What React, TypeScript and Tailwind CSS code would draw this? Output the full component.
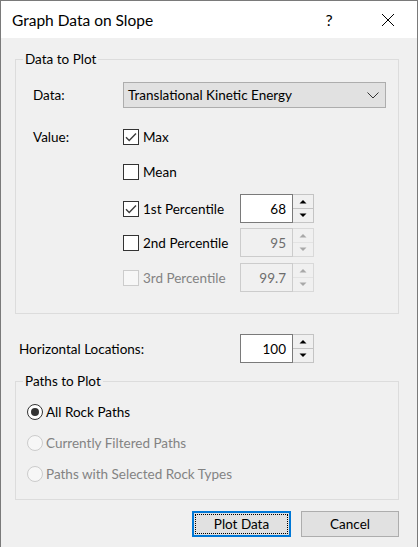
import { useState } from 'react';

const font = "font-['Lato','Liberation_Sans',sans-serif]";

function CheckBox({ checked, disabled, label, onChange }: { checked: boolean; disabled?: boolean; label: string; onChange?: () => void }) {
  return (
    <button
      type="button"
      onClick={disabled ? undefined : onChange}
      className="flex items-center gap-[4px] h-[29px] text-left"
    >
      <span
        className={`w-[16px] h-[16px] border flex items-center justify-center shrink-0 ${
          disabled ? 'border-[#cccccc] bg-[#f7f7f7]' : 'border-[#333333] bg-white'
        }`}
      >
        {checked && (
          <svg width="14" height="14" viewBox="0 0 14 14">
            <path d="M2 7.2 L5.2 10.4 L12 3.4" fill="none" stroke="#3c3c3c" strokeWidth="1.4" />
          </svg>
        )}
      </span>
      <span className={disabled ? 'text-[#838383]' : 'text-black'}>{label}</span>
    </button>
  );
}

function SpinBox({ value, disabled }: { value: string; disabled?: boolean }) {
  const arrow = disabled ? '#a8a8a8' : '#000000';
  return (
    <div className="flex h-[29px]">
      <div
        className={`w-[53px] border flex items-center justify-end pr-[6px] ${
          disabled ? 'border-[#cccccc] bg-[#f0f0f0] text-[#6d6d6d]' : 'border-[#7a7a7a] bg-white text-black'
        }`}
      >
        {value}
      </div>
      <div className={`w-[21px] flex flex-col border-y border-r ${disabled ? 'border-[#d9d9d9]' : 'border-[#c4c4c4]'}`}>
        <div className={`flex-1 flex items-center justify-center border-b bg-[#f0f0f0] ${disabled ? 'border-[#e3e3e3]' : 'border-[#c4c4c4]'}`}>
          <svg width="8" height="5" viewBox="0 0 8 5">
            <path d="M0.5 4.5 L4 1 L7.5 4.5 Z" fill={arrow} />
          </svg>
        </div>
        <div className="flex-1 flex items-center justify-center bg-[#f0f0f0]">
          <svg width="8" height="5" viewBox="0 0 8 5">
            <path d="M0.5 0.5 L4 4 L7.5 0.5 Z" fill={arrow} />
          </svg>
        </div>
      </div>
    </div>
  );
}

function Radio({ checked, disabled, label, onChange }: { checked: boolean; disabled?: boolean; label: string; onChange?: () => void }) {
  return (
    <button type="button" onClick={disabled ? undefined : onChange} className="flex items-center gap-[3px] h-[24px] text-left">
      <span
        className={`w-[16px] h-[16px] rounded-full border flex items-center justify-center ${
          disabled ? 'border-[#cccccc] bg-[#f7f7f7]' : 'border-[#333333] bg-white'
        }`}
      >
        {checked && <span className="w-[8px] h-[8px] rounded-full bg-[#333333]" />}
      </span>
      <span className={disabled ? 'text-[#838383]' : 'text-black'}>{label}</span>
    </button>
  );
}

export default function App() {
  const [max, setMax] = useState(true);
  const [mean, setMean] = useState(false);
  const [p1, setP1] = useState(true);
  const [p2, setP2] = useState(false);

  return (
    <div className={`w-[418px] h-[547px] bg-[#f0f0f0] border-x border-t border-[#7a7a7a] ${font} text-[13.5px] leading-[18px] text-black`}>
      {/* title bar */}
      <div className="h-[37px] bg-white flex items-center pl-[11px]">
        <span className="text-[15.5px] flex-1">Graph Data on Slope</span>
        <span className="text-[16px] w-[20px] mr-[42px] text-center">?</span>
        <svg width="14" height="14" viewBox="0 0 14 14" className="mr-[22px]">
          <path d="M1 1 L13 13 M13 1 L1 13" stroke="#000" strokeWidth="1" />
        </svg>
      </div>

      <div className="pl-[14px] pr-[18px]">
        <fieldset className="mt-[12px] border border-[#dcdcdc] pl-[17px] pt-[14px] pb-[21px]">
          <legend className="-ml-[10px] px-[2px] leading-[18px]">Data to Plot</legend>

          <div className="flex items-center h-[26px]">
            <span className="w-[90px]">Data:</span>
            <div className="w-[263px] h-[26px] bg-[#e1e1e1] border border-[#adadad] flex items-center pl-[4px] pr-[6px]">
              <span className="flex-1">Translational Kinetic Energy</span>
              <svg width="12" height="7" viewBox="0 0 12 7">
                <path d="M0.5 0.5 L6 6 L11.5 0.5" fill="none" stroke="#333" strokeWidth="1" />
              </svg>
            </div>
          </div>

          <div className="flex mt-[14px]">
            <span className="w-[90px] h-[29px] flex items-center">Value:</span>
            <div className="flex flex-col">
              <CheckBox checked={max} label="Max" onChange={() => setMax(!max)} />
              <div className="mt-[6px]">
                <CheckBox checked={mean} label="Mean" onChange={() => setMean(!mean)} />
              </div>
              <div className="mt-[8px] flex items-center">
                <div className="w-[117px]">
                  <CheckBox checked={p1} label="1st Percentile" onChange={() => setP1(!p1)} />
                </div>
                <SpinBox value="68" />
              </div>
              <div className="mt-[5px] flex items-center">
                <div className="w-[117px]">
                  <CheckBox checked={p2} label="2nd Percentile" onChange={() => setP2(!p2)} />
                </div>
                <SpinBox value="95" disabled />
              </div>
              <div className="mt-[6px] flex items-center">
                <div className="w-[117px]">
                  <CheckBox checked={false} disabled label="3rd Percentile" />
                </div>
                <SpinBox value="99.7" disabled />
              </div>
            </div>
          </div>
        </fieldset>

        <div className="mt-[20px] flex items-center">
          <span className="w-[225px] pl-[4px]">Horizontal Locations:</span>
          <SpinBox value="100" />
        </div>

        <fieldset className="mt-[9px] border border-[#dcdcdc] pl-[11px] pt-[10px] pb-[13px]">
          <legend className="-ml-[4px] px-[2px] leading-[18px]">Paths to Plot</legend>
          <div className="flex flex-col gap-[7px]">
            <Radio checked label="All Rock Paths" />
            <Radio checked={false} disabled label="Currently Filtered Paths" />
            <Radio checked={false} disabled label="Paths with Selected Rock Types" />
          </div>
        </fieldset>

        <div className="mt-[11px] flex justify-end gap-[10px]">
          <button type="button" className="w-[99px] h-[26px] bg-[#e1e1e1] border-2 border-[#0078d7] p-[1px]">
            <span className="w-full h-full flex items-center justify-center border border-dotted border-black">Plot Data</span>
          </button>
          <button type="button" className="w-[98px] h-[26px] bg-[#e1e1e1] border border-[#adadad] flex items-center justify-center">
            Cancel
          </button>
        </div>
      </div>
    </div>
  );
}
